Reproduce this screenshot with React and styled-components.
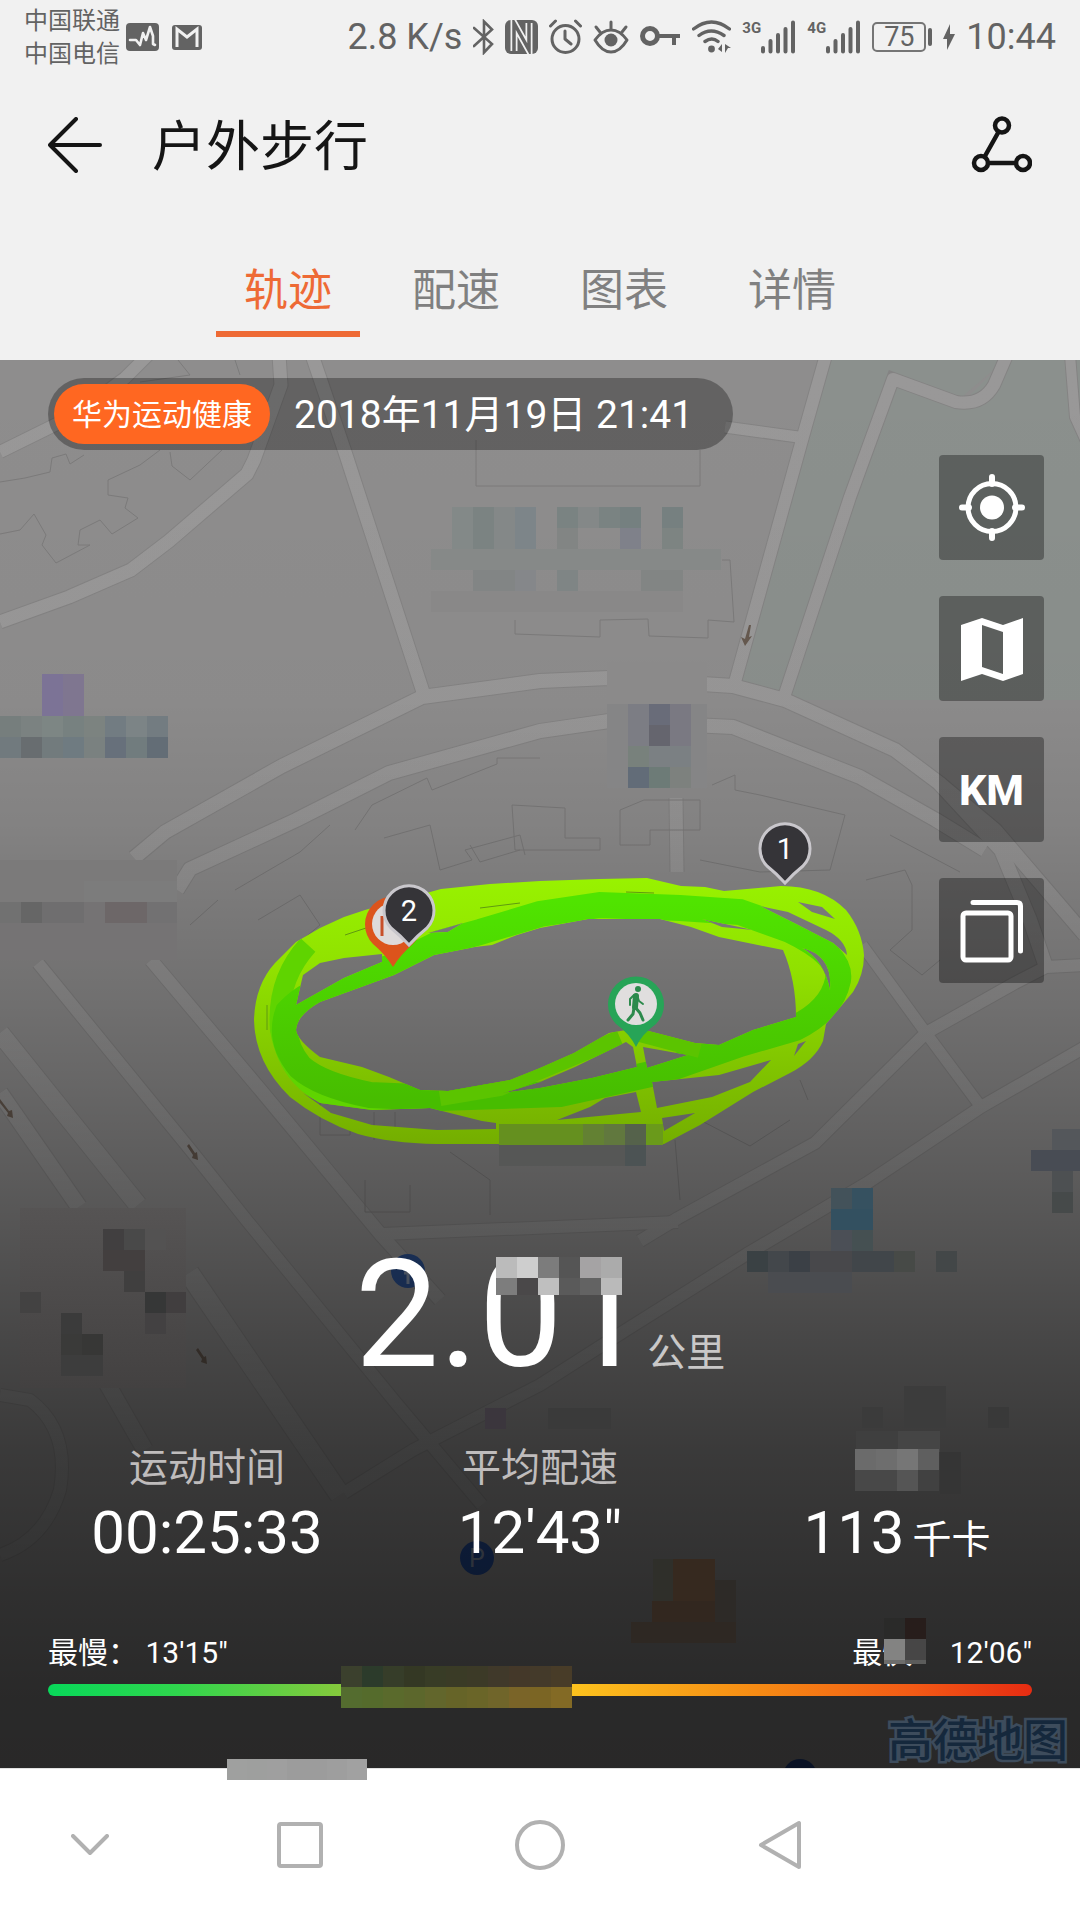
import React, { useState } from 'react';
import styled, { createGlobalStyle } from 'styled-components';

const GlobalStyle = createGlobalStyle`
  *, *::before, *::after { box-sizing: border-box; }
  body {
    margin: 0;
    background: #f1f1f1;
    font-family: Roboto, "Noto Sans CJK SC", sans-serif;
  }
  button {
    border: 0;
    padding: 0;
    background: none;
    font: inherit;
    color: inherit;
    cursor: pointer;
  }
  svg { display: block; }
`;

const Screen = styled.div`
  min-height: 100vh;
  display: flex;
  flex-direction: column;
`;

/* ---------- status bar ---------- */

const StatusBar = styled.div`
  height: 74px;
  padding: 0 24px;
  display: flex;
  align-items: center;
  justify-content: space-between;
  color: #636363;
`;

const StatusGroup = styled.div`
  display: flex;
  align-items: center;
  gap: ${(p) => p.$gap}px;
`;

const Carriers = styled.div`
  padding-top: 2px;
  font-size: 24px;
  line-height: 33px;
  white-space: nowrap;
`;

const StatusText = styled.span`
  font-size: 36px;
  line-height: 42px;
  white-space: nowrap;
`;

const Signal = styled.span`
  display: flex;
  align-items: flex-start;
`;

const SignalKind = styled.span`
  width: 18px;
  font-size: 15px;
  line-height: 16px;
  font-weight: 700;
`;

const Battery = styled.span`
  display: flex;
  align-items: center;
  gap: 2px;

  &::after {
    content: '';
    width: 4px;
    height: 18px;
    border-radius: 2px;
    background: #636363;
  }
`;

const BatteryLevel = styled.span`
  width: 54px;
  height: 30px;
  border: 2px solid #757575;
  border-radius: 5px;
  font-size: 27px;
  line-height: 27px;
  text-align: center;
`;

/* ---------- header ---------- */

const TitleBar = styled.header`
  height: 144px;
  padding: 0 48px 2px;
  display: flex;
  align-items: center;
  gap: 50px;
  color: #151515;
`;

const Title = styled.h1`
  margin: 0;
  padding-top: 6px;
  flex: 1;
  font-size: 54px;
  line-height: 64px;
  font-weight: 400;
`;

const Tabs = styled.div`
  display: flex;
  justify-content: center;
  gap: 24px;
  padding: 29px 0 23px;
`;

const Tab = styled.button`
  width: 144px;
  height: 90px;
  padding-top: 4px;
  border-bottom: 6px solid ${(p) => (p.$active ? '#ee6a35' : 'transparent')};
  color: ${(p) => (p.$active ? '#ee6a35' : '#808080')};
  font-size: 44px;
  line-height: 52px;
`;

/* ---------- map ---------- */

const MapPanel = styled.main`
  position: relative;
  flex: 1;
  display: flex;
  flex-direction: column;
  padding: 18px 0 72px;
  background: #2a2929;
`;

const MapCanvas = styled.svg`
  position: absolute;
  inset: 0;
  width: 100%;
  height: 100%;
`;

const Overlay = styled.div`
  position: relative;
  display: flex;
  flex-direction: column;
  flex: 1;
`;

const Banner = styled.div`
  align-self: flex-start;
  display: flex;
  align-items: center;
  gap: 24px;
  height: 72px;
  margin-left: 48px;
  padding: 6px 40px 6px 6px;
  border-radius: 36px;
  background: rgba(0, 0, 0, 0.3);
  color: #fff;
`;

const Brand = styled.span`
  padding: 1px 18px 0;
  border-radius: 30px;
  background: #ff6721;
  font-size: 30px;
  line-height: 59px;
  white-space: nowrap;
`;

const DateText = styled.time`
  padding-top: 2px;
  font-size: 39px;
  line-height: 58px;
  white-space: nowrap;
`;

const Tools = styled.div`
  align-self: flex-end;
  display: flex;
  flex-direction: column;
  gap: 36px;
  margin: 5px 36px 0 0;
`;

const ToolButton = styled.button`
  width: 105px;
  height: 105px;
  border-radius: 4px;
  display: grid;
  place-items: center;
  background: rgba(0, 0, 0, 0.33);
  color: #fff;
  font-size: 43px;
  line-height: 48px;
  font-weight: 800;
`;

/* ---------- figures ---------- */

const Stats = styled.section`
  margin-top: auto;
  color: #fff;
`;

const Distance = styled.div`
  display: flex;
  align-items: baseline;
  justify-content: center;
`;

const DistanceValue = styled.span`
  position: relative;
  font-size: 150px;
  line-height: 176px;
`;

const Unit = styled.span`
  font-size: 39px;
  line-height: 46px;
  color: #c9c8c8;
`;

const ValueUnit = styled(Unit)`
  margin-left: 8px;
  color: #fff;
`;

const Metrics = styled.dl`
  margin: 42px 0 67px;
  padding-left: 48px;
  display: grid;
  grid-template-columns: 318fr 348fr 366fr;
`;

const Metric = styled.div`
  display: flex;
  flex-direction: column;
  align-items: center;
  gap: 7px;
`;

const MetricLabel = styled.dt`
  height: 46px;
  display: flex;
  align-items: flex-end;
  font-size: 39px;
  line-height: 46px;
  color: #bfbcbc;
`;

const MetricValue = styled.dd`
  margin: 0;
  font-size: 60px;
  line-height: 70px;
  white-space: nowrap;
`;

const PaceRange = styled.div`
  padding: 0 48px;
`;

const PaceEnds = styled.div`
  display: flex;
  justify-content: space-between;
  margin-bottom: 13px;
  font-size: 30px;
  line-height: 36px;
`;

const PaceEnd = styled.span`
  position: relative;
  white-space: nowrap;
`;

const PaceBar = styled.div`
  position: relative;
  height: 12px;
  border-radius: 6px;
  background: linear-gradient(90deg, #08d85a 0%, #2fd64d 13%, #86c93c 30%, #fcc31e 53%, #f68b14 72%, #f25a16 88%, #e62c12 100%);
`;

/* ---------- blurred cells ---------- */

const MosaicGrid = styled.span`
  display: grid;
  grid-template-columns: repeat(${(p) => p.$cols}, ${(p) => p.$size}px);
  grid-template-rows: ${(p) => p.$rows};
`;

const FloatingMosaic = styled(MosaicGrid)`
  position: absolute;
  left: ${(p) => p.$left};
  top: ${(p) => p.$top}px;
`;

const Cell = styled.span`
  background: ${(p) => p.$color};
`;

function Mosaic({ cells, rows = '21px 21px', size = 21, left, top }) {
  const Grid = left === undefined ? MosaicGrid : FloatingMosaic;
  return (
    <Grid $cols={cells[0].length} $size={size} $rows={rows} $left={left} $top={top}>
      {cells.flat().map((color, i) => (
        <Cell key={i} $color={color} />
      ))}
    </Grid>
  );
}

/* ---------- system navigation ---------- */

const SystemNav = styled.nav`
  position: relative;
  height: 152px;
  display: grid;
  grid-template-columns: 3fr 4fr 4fr 4fr 3fr;
  background: #fff;
  border-top: 1px solid #e2e2e2;
`;

const NavButton = styled.button`
  display: grid;
  place-items: center;
  color: #b1b1b1;
`;

/* ---------- icons ---------- */

const line = { fill: 'none', stroke: 'currentColor', strokeLinecap: 'round', strokeLinejoin: 'round' };

const ActivityIcon = () => (
  <svg width="33" height="28" viewBox="0 0 33 28">
    <rect width="33" height="28" rx="4" fill="currentColor" />
    <path d="M4 17h6l4 5 3-12 3 7 4-13 3 9v8l2 1" {...line} stroke="#f1f1f1" strokeWidth="2.6" />
  </svg>
);

const MailIcon = () => (
  <svg width="30" height="25" viewBox="0 0 30 25">
    <rect width="30" height="25" rx="3" fill="currentColor" />
    <path d="M5 22V4l10 8 10-8v18" fill="none" stroke="#f1f1f1" strokeWidth="3" />
  </svg>
);

const BluetoothIcon = () => (
  <svg width="21" height="36" viewBox="0 0 21 36">
    <path d="M1 9l18 16-8 8.500V2.500l8 8L1 27" {...line} strokeWidth="2.600" strokeLinejoin="miter" />
  </svg>
);

const NfcIcon = () => (
  <svg width="33" height="34" viewBox="0 0 33 34">
    <rect width="33" height="34" rx="6" fill="currentColor" />
    <path d="M9 31V3l15 27V3" fill="none" stroke="#f1f1f1" strokeWidth="7" />
    <path d="M9 33V3l15 27V1" fill="none" stroke="currentColor" strokeWidth="3.500" />
  </svg>
);

const AlarmIcon = () => (
  <svg width="33" height="36" viewBox="0 0 33 36">
    <g {...line} strokeWidth="3">
      <circle cx="16.500" cy="20" r="13.500" />
      <path d="M16 12v8l6 5M1.500 7l5-5M31.500 7l-5-5" />
    </g>
  </svg>
);

const EyeIcon = () => (
  <svg width="36" height="34" viewBox="0 0 36 34">
    <g {...line} strokeWidth="3">
      <path d="M2 20q7-10 16-10t16 10q-7 12-16 12T2 20zM18 9V2M7 12L3 7M29 12l4-5" />
    </g>
    <circle cx="18" cy="20" r="6.500" fill="currentColor" />
  </svg>
);

const KeyIcon = () => (
  <svg width="41" height="22" viewBox="0 0 41 22">
    <circle cx="10" cy="10" r="7.500" fill="none" stroke="currentColor" strokeWidth="5" />
    <path d="M18 10h22M34 10v9" fill="none" stroke="currentColor" strokeWidth="4" />
  </svg>
);

const WifiIcon = () => (
  <svg width="39" height="34" viewBox="0 0 39 34">
    <path d="M1.500 9q18-14 36 0M7 15.500q12-9 25 0M13 21.500q7-5 13 0" {...line} strokeWidth="3.400" />
    <circle cx="19.500" cy="29" r="3.400" fill="currentColor" />
    <path d="M30 24v8l-4-3zM33 24l6 4-3 0-3 5z" fill="currentColor" />
  </svg>
);

const BarsIcon = () => (
  <svg width="36" height="34" viewBox="0 0 36 34">
    <path d="M3 28v3.500M10.500 21v10.500M18 15v16.500M25.500 9v22.500M33 2.500v29" {...line} strokeWidth="4" />
  </svg>
);

const BoltIcon = () => (
  <svg width="12" height="26" viewBox="0 0 12 26">
    <path d="M7 0L0 15h4v11l8-16H7z" fill="currentColor" />
  </svg>
);

const BackIcon = () => (
  <svg width="54" height="56" viewBox="0 0 54 56">
    <path d="M28 2L2 28l26 26M2 28h50" {...line} strokeWidth="4" />
  </svg>
);

const ShareIcon = () => (
  <svg width="62" height="58" viewBox="0 0 62 58">
    <g {...line} strokeWidth="4.500">
      <circle cx="32" cy="9.500" r="7" />
      <circle cx="11" cy="47" r="7" />
      <circle cx="53" cy="47" r="7" />
      <path d="M28.500 16L15 40M18 47h28" />
    </g>
  </svg>
);

const LocateIcon = () => (
  <svg width="66" height="67" viewBox="0 0 66 67">
    <circle cx="33" cy="33.500" r="24" fill="none" stroke="currentColor" strokeWidth="5" />
    <circle cx="33" cy="33.500" r="12" fill="currentColor" />
    <path d="M33 3v7M33 57v7M3 33.500h7M56 33.500h7" {...line} strokeWidth="6" />
  </svg>
);

const MapIcon = () => (
  <svg width="64" height="64" viewBox="0 0 64 64">
    <path
      d="M1 8L22 1l21 7 20-7v56l-20 7-21-7-21 7zM22 8v42l21 7V15z"
      fill="currentColor"
      fillRule="evenodd"
    />
  </svg>
);

const LayersIcon = () => (
  <svg width="64" height="64" viewBox="0 0 64 64">
    <rect x="3" y="14" width="48" height="47" rx="3" fill="none" stroke="currentColor" strokeWidth="5" />
    <path d="M13 3.500h44q3.500 0 3.500 3.500v45" {...line} strokeWidth="5" />
  </svg>
);

/* ---------- map drawing ---------- */

const ROADS = [
  [12, 'M148 355L125 378L75 415L0 452'],
  [13, 'M279 355L281 385L254 460L247 474L169 541L131 570L69 597L0 622'],
  [13, 'M312 355L345 452L424 695'],
  [12, 'M826 355L802 440L735 682'],
  [12, 'M1007 355L994 385Q982 406 956 402L893 379L850 497L784 697'],
  [11, 'M725 427L798 437'],
  [10, 'M1070 355L1075 417L1090 450'],
  [14, 'M134 858L165 832L282 766L422 697L540 681L609 678L733 686L785 700L895 750L939 783L1001 850L1030 920L1046 967'],
  [14, 'M177 890L190 869L296 820L389 773L540 731L609 721L733 727L860 777L936 820L985 850'],
  [14, 'M939 783L995 830L1085 935'],
  [13, 'M676 798L677 872'],
  [12, 'M38 963L193 1153L248 1222L396 1403L482 1505'],
  [13, 'M151 960L258 1087L382 1236L440 1300'],
  [18, 'M0 1033L138 1205'],
  [16, 'M0 1093L79 1207'],
  [20, 'M189 1273L340 1495'],
  [12, 'M344 1493L413 1450L540 1385L626 1330L747 1254L867 1183L981 1107L1085 1047'],
  [12, 'M640 1241L678 1218L815 1143L926 1033L1015 983L1046 967L1085 965'],
  [11, 'M862 945L926 1033L981 1107'],
  [12, 'M382 1234L678 1222'],
  [16, 'M105 1380L145 1450'],
  [12, 'M0 1395L30 1400Q70 1430 60 1490Q45 1540 0 1555'],
];

const BUILDINGS = [
  'M0 482L25 478L50 472L52 458L66 454L70 464L84 455M170 452L172 466L190 480L222 450M0 534L20 530L34 514L46 535L42 545L56 563L90 545L78 545L80 530L100 520L112 534L138 518L125 508L128 498L108 495L108 480L140 465L160 450',
  'M476 440V486H700V450M515 620V634L600 637V620L648 619L649 636L708 638V620L734 622L730 560H722',
  'M178 360L190 375L140 382M235 360L240 375',
  'M540 758H497V764L432 790L427 778L372 805L355 830M520 850L480 862L470 845M235 890L300 852L330 825M190 925L218 900M258 920L300 895L320 925L290 950M512 805L565 808V838H600V850H515zM644 800H700V830H650V845H620V810z',
  'M384 838L430 825L440 870L472 860L465 850L520 835L525 855M712 785L735 775V790L760 795L845 815L830 870L760 872L700 860',
  'M866 880L905 870L912 885V930L890 950L922 975L940 960M890 835L960 872',
  'M320 1100V1135H350V1125M374 1112V1140M395 1112V1140M365 1180V1212H410V1185M450 1152L490 1180V1215M675 1140L680 1200M700 1120L750 1146L790 1120M800 1080L808 1100',
];

const TRACK_AREA =
  'M254 1020Q255 985 275 963L296 942L320 928L344 917L365 910L441 889L490 884L540 881L600 879L647 878L681 886L705 887L724 891L781 886Q822 886 846 910Q862 930 864 955Q864 975 853 992L826 1024L823 1041Q815 1060 790 1073L753 1092L700 1125L664 1144H499L437 1144Q390 1143 358 1134Q320 1121 290 1097Q255 1063 254 1020Z' +
  'M296 1030Q297 1015 320 1002L394 975L434 955L475 947L492 945L517 935L540 928L588 919L660 919L691 927L719 937L783 950Q796 980 796 1017L753 1030L719 1045L695 1043L637 1028L609 1033L574 1053L540 1068L510 1080L448 1091L420 1090L389 1077L362 1067L320 1057Q297 1040 296 1030Z' +
  'M503 1093L540 1082L575 1067L626 1042L633 1047L637 1067L592 1078L540 1088Z' +
  'M643 1047L688 1055L647 1068Z' +
  'M652 1082L719 1075L771 1060L750 1082L712 1097L657 1108Z' +
  'M636 1092L605 1098L590 1107L557 1120L641 1112Z' +
  'M662 1118L695 1113L664 1131Z' +
  'M303 1093L320 1103L372 1110L430 1108L482 1121L496 1123V1129L437 1130L372 1125L331 1113Z' +
  'M296 1005L303 975L320 963L344 958L382 954V962L344 978Z' +
  'M428 933L463 923L448 932Z' +
  'M760 906L788 912L826 930Q846 940 847 955L833 943L798 925Z' +
  'M798 902L822 907L835 919L812 912Z' +
  'M802 948Q833 955 830 990Q824 960 802 948Z' +
  'M806 1041L794 1056L798 1044Z' +
  'M702 919L753 930L722 927Z';

const TRACK_CORE =
  'M288 1012Q308 990 345 983L394 966L440 943L480 932L540 914L600 905L680 908L740 912L790 930Q842 955 838 980Q832 1010 795 1028L740 1044L660 1072L560 1094L440 1098L370 1095Q320 1085 300 1067Q278 1040 288 1012Z';

/* x, y, width, height, colour of every blurred patch lying on the map */
const PATCHES = [
  [42, 674, 21, 42, '#7c7396'], [63, 674, 21, 42, '#7f7690'],
  [0, 716, 21, 21, '#767e7d'], [21, 716, 21, 21, '#7b8281'], [42, 716, 21, 21, '#7d8684'], [63, 716, 21, 21, '#778180'],
  [84, 716, 21, 21, '#7c8380'], [105, 716, 21, 21, '#727c82'], [126, 716, 21, 21, '#7c8486'], [147, 716, 21, 21, '#737c81'],
  [0, 737, 21, 21, '#717a7e'], [21, 737, 21, 21, '#686d70'], [42, 737, 21, 21, '#727b7d'], [63, 737, 21, 21, '#6f7b81'],
  [84, 737, 21, 21, '#7a8180'], [105, 737, 21, 21, '#67707b'], [126, 737, 21, 21, '#717c7e'], [147, 737, 21, 21, '#636d76'],
  [452, 507, 21, 42, '#838988'], [473, 507, 21, 42, '#7b8382'], [494, 507, 21, 42, '#848888'], [515, 507, 21, 42, '#7d8589'],
  [557, 507, 21, 21, '#7a8382'], [578, 507, 21, 21, '#848888'], [599, 507, 21, 21, '#7a8382'], [620, 507, 21, 21, '#758080'],
  [662, 507, 21, 21, '#768080'], [557, 528, 21, 21, '#828584'], [620, 528, 21, 21, '#7f818a'], [662, 528, 21, 21, '#7d8482'],
  [431, 549, 290, 21, '#868988'], [473, 570, 42, 21, '#828585'], [515, 570, 21, 40, '#85878a'], [557, 570, 21, 21, '#7f8585'],
  [641, 570, 42, 21, '#828584'], [431, 591, 252, 21, '#898888'],
  [607, 662, 100, 42, '#8b8a8a'], [607, 704, 100, 84, '#858586'],
  [628, 704, 21, 42, '#7c7d84'], [649, 704, 21, 21, '#696c79'], [649, 725, 21, 21, '#65656e'], [670, 704, 21, 42, '#7a7982'],
  [628, 746, 21, 21, '#78817c'], [649, 746, 42, 21, '#7b8083'], [628, 767, 21, 21, '#626c78'], [649, 767, 21, 21, '#6d7b77'],
  [670, 767, 21, 21, '#7d817e'],
  [0, 860, 177, 42, '#7b7a7a'], [84, 881, 93, 21, '#7c7c7c'],
  [0, 902, 177, 58, '#757374'], [0, 902, 21, 21, '#717171'], [21, 902, 21, 21, '#666'], [42, 902, 42, 21, '#6f6e6f'],
  [105, 902, 42, 21, '#6d6768'], [147, 902, 30, 21, '#727172'],
  [499, 1124, 84, 21, '#65901f'], [583, 1124, 21, 21, '#638133'], [604, 1124, 21, 21, '#61783e'], [625, 1124, 21, 21, '#55624b'],
  [646, 1124, 17, 21, '#6a9a1b'], [499, 1145, 126, 21, '#565756'], [625, 1145, 21, 21, '#4c5354'],
  [831, 1188, 21, 21, '#43525a'], [852, 1188, 21, 21, '#365160'], [831, 1209, 42, 21, '#335060'], [852, 1230, 21, 21, '#455052'],
  [831, 1230, 21, 21, '#4b4f56'],
  [747, 1251, 21, 21, '#3a4144'], [768, 1251, 21, 21, '#43474b'], [789, 1251, 21, 21, '#3b4046'], [810, 1251, 42, 21, '#48484b'],
  [852, 1251, 42, 21, '#41464a'], [894, 1251, 21, 21, '#474a47'], [936, 1251, 21, 21, '#434748'], [768, 1272, 84, 21, '#4a4c50'],
  [1031, 1150, 49, 21, '#484c54'], [1052, 1129, 28, 21, '#54575b'], [1052, 1171, 21, 21, '#4d5052'], [1052, 1192, 21, 21, '#464a4a'],
  [20, 1208, 166, 180, 'url(#patchShade)'], [103, 1229, 21, 21, '#413f40'], [124, 1229, 21, 21, '#494949'], [145, 1229, 21, 21, '#535252'],
  [103, 1250, 42, 21, '#433f3f'], [124, 1271, 21, 21, '#403f3f'], [20, 1292, 21, 21, '#434242'], [145, 1292, 21, 21, '#363737'],
  [166, 1292, 20, 21, '#413e3f'], [61, 1313, 21, 21, '#3b3b3b'], [145, 1313, 21, 21, '#434142'], [61, 1334, 42, 21, '#3a3a39'],
  [61, 1355, 42, 21, '#3d3d3d'], [82, 1334, 21, 21, '#373736'],
  [485, 1408, 21, 21, '#3b363d'], [548, 1408, 63, 21, '#3a3a3a'], [862, 1407, 21, 21, '#3b3b3b'], [904, 1386, 42, 42, '#3c3c3c'],
  [988, 1407, 21, 21, '#393939'],
  [856, 1431, 42, 21, '#3f3f3f'], [898, 1431, 42, 21, '#454545'], [940, 1452, 21, 42, '#353535'],
  [653, 1559, 20, 63, '#2f2f2a'], [673, 1559, 42, 63, '#36291f'], [715, 1580, 21, 42, '#2d2a27'],
  [631, 1622, 105, 21, '#2e2823'], [652, 1601, 63, 21, '#32271f'],
];

function NumberPin({ x, y, children }) {
  return (
    <g transform={`translate(${x} ${y})`}>
      <path
        d="M0 34Q-8 25-18 17A25 25 0 1 1 18 17Q8 25 0 34Z"
        fill="#353438"
        stroke="#c9c7cc"
        strokeWidth="3"
      />
      <text y="10" textAnchor="middle" fontSize="29" fill="#fff">{children}</text>
    </g>
  );
}

function RouteMap() {
  return (
    <MapCanvas viewBox="0 360 1080 1408" preserveAspectRatio="xMidYMid slice" aria-hidden="true">
      <defs>
        <linearGradient id="shade" gradientUnits="userSpaceOnUse" x1="0" y1="360" x2="0" y2="1768">
          {[[0, 0], [0.24, 0.02], [0.33, 0.08], [0.384, 0.14], [0.455, 0.21], [0.526, 0.29], [0.625, 0.41],
            [0.703, 0.51], [0.774, 0.59], [0.88, 0.67], [0.952, 0.71], [1, 0.715]].map(([at, alpha]) => (
              <stop key={at} offset={at} stopColor="#000" stopOpacity={alpha} />
          ))}
        </linearGradient>
        <linearGradient id="roadFill" gradientUnits="userSpaceOnUse" x1="0" y1="360" x2="0" y2="1500">
          <stop offset="0" stopColor="#999898" />
          <stop offset="0.55" stopColor="#989797" />
          <stop offset="1" stopColor="#929292" />
        </linearGradient>
        <linearGradient id="track" gradientUnits="userSpaceOnUse" x1="0" y1="880" x2="0" y2="1144">
          <stop offset="0" stopColor="#98f200" />
          <stop offset="0.35" stopColor="#90e000" />
          <stop offset="1" stopColor="#74ae00" />
        </linearGradient>
        <linearGradient id="trackCore" gradientUnits="userSpaceOnUse" x1="0" y1="900" x2="0" y2="1100">
          <stop offset="0" stopColor="#50e400" />
          <stop offset="1" stopColor="#47bd00" />
        </linearGradient>
        <linearGradient id="patchShade" x1="0" y1="0" x2="0" y2="1">
          <stop offset="0" stopColor="#565454" />
          <stop offset="1" stopColor="#434141" />
        </linearGradient>
        <clipPath id="trackClip">
          <path d={TRACK_AREA} clipRule="evenodd" />
        </clipPath>
      </defs>

      <rect y="360" width="1080" height="1408" fill="#8e8d8d" />
      <path d="M826 360H1005L956 402L893 379L784 697L735 682ZM893 385L960 405L1005 360H1080V700H785Z" fill="#8b908d" />
      <g fill="none" stroke="#848383">
        {ROADS.map(([w, d]) => <path key={d} d={d} strokeWidth={w + 2} />)}
      </g>
      <g fill="none" stroke="url(#roadFill)" strokeLinejoin="round">
        {ROADS.map(([w, d]) => <path key={d} d={d} strokeWidth={w} />)}
      </g>
      <g fill="none" stroke="#7c7b7b" strokeWidth="1">
        {BUILDINGS.map((d) => <path key={d} d={d} />)}
      </g>
      <g fill="#66594f">
        <path d="M749 625l-4 14-4-2 4 9 7-10-3 1 2-12z" />
        <path d="M0 1103l8 10-1 3 6 2-1-8-3 1-9-12zM187 1146l6 9-1 3 6 2-1-8-2 1-6-9zM196 1350l6 9-1 3 6 2-1-8-2 1-6-9z" />
      </g>

      <g>
        <circle cx="408" cy="1271" r="17" fill="#2b5090" />
        <circle cx="477" cy="1558" r="17" fill="#234a94" />
        <text x="477" y="1567" textAnchor="middle" fontSize="25" fill="#8190a8">P</text>
        <circle cx="800" cy="1776" r="17" fill="#1f3f80" />
        <path d="M404 1273h12M408 1274v10" stroke="#8190a8" strokeWidth="3" />
      </g>

      <rect y="360" width="1080" height="1408" fill="url(#shade)" />

      <path d={TRACK_AREA} fill="url(#track)" fillRule="evenodd" />
      <g clipPath="url(#trackClip)" fill="none">
        <path d="M308 945Q276 980 280 1030Q290 1085 340 1100L430 1100" stroke="#5fd400" strokeWidth="20" />
        <path d={TRACK_CORE} stroke="url(#trackCore)" strokeWidth="26" />
        <path d="M640 1034L700 1050M620 1038L500 1088L440 1098" stroke="#5bc400" strokeWidth="16" />
        <path d="M345 935L366 928L392 923M626 892L654 893M480 908L520 903M267 1005V1030" stroke="#5f9a10" strokeWidth="1" />
      </g>

      <g shapeRendering="crispEdges">
        {PATCHES.map(([x, y, w, h, fill], i) => (
          <rect key={i} x={x} y={y} width={w} height={h} fill={fill} />
        ))}
      </g>

      <g transform="translate(393 924)">
        <path d="M0 43Q-8 30-20 20A28 28 0 1 1 20 20Q8 30 0 43Z" fill="#dc541c" />
        <circle r="21" fill="#dedada" />
        <path d="M-11 12V-8" stroke="#c8502a" strokeWidth="3" />
      </g>
      <NumberPin x={409} y={911}>2</NumberPin>
      <NumberPin x={785} y={849}>1</NumberPin>

      <g transform="translate(636 1004)">
        <path d="M0 43Q-6 30-20 20A28 28 0 1 1 20 20Q6 30 0 43Z" fill="#27a457" />
        <circle r="21" fill="#e0dede" />
        <circle cx="2" cy="-15" r="3" fill="#2c8a4c" />
        <g fill="none" stroke="#2c8a4c" strokeLinecap="round" strokeLinejoin="round">
          <path d="M0-8L-1 3" strokeWidth="6" />
          <path d="M-1 3L4 9L7 16M-2 4L-3 10L-8 16" strokeWidth="3" />
          <path d="M1-9L3-3L7 0M-2-9L-6-5V1" strokeWidth="2" />
        </g>
      </g>

      <text
        x="978"
        y="1757"
        textAnchor="middle"
        fontSize="45"
        fontWeight="500"
        fill="#15283c"
        stroke="#3d4c5c"
        strokeWidth="5"
        paintOrder="stroke"
      >
        高德地图
      </text>
    </MapCanvas>
  );
}

/* ---------- page ---------- */

const TABS = ['轨迹', '配速', '图表', '详情'];

const DISTANCE_CELLS = [
  ['#bbbbbb', '#cecece', '#7c7c7c', '#555555', '#a5a3a4', '#ababab'],
  ['#7d7d7d', '#4a4849', '#bfbfbf', '#5a5a5a', '#636363', '#bababa'],
];
const LABEL_CELLS = [
  ['#6b6b6b', '#6e6e6e', '#767676', '#5f5f5f'],
  ['#484848', '#484848', '#555555', '#414141'],
];
const FASTEST_CELLS = [
  ['#2a2a29', '#271d1b'],
  ['#838382', '#474646'],
  ['#6d6d6c', '#5c5c5b'],
];
const BAR_CELLS = [
  ['#3b402d', '#2c3b2b', '#363d29', '#343824', '#383c26', '#3a3b26', '#3c3a27', '#40392a', '#443829', '#443a2a', '#483c28'],
  ['#546c2f', '#556b2c', '#5a6a2c', '#5c672c', '#62662c', '#666428', '#6a6528', '#70652a', '#7a6428', '#7b6524', '#836a25'],
];
const NAV_CELLS = [['#9fa09f', '#9e9f9e', '#9f9f9f', '#9c9c9c', '#9c9c9c', '#9e9e9e', '#a1a1a1']];

export default function App() {
  const [tab, setTab] = useState(TABS[0]);

  return (
    <Screen>
      <GlobalStyle />
      <StatusBar>
        <StatusGroup $gap={6}>
          <Carriers>
            <div>中国联通</div>
            <div>中国电信</div>
          </Carriers>
          <StatusGroup $gap={13}>
            <ActivityIcon />
            <MailIcon />
          </StatusGroup>
        </StatusGroup>
        <StatusGroup $gap={11}>
          <StatusText>2.8 K/s</StatusText>
          <BluetoothIcon />
          <NfcIcon />
          <AlarmIcon />
          <EyeIcon />
          <KeyIcon />
          <WifiIcon />
          <Signal><SignalKind>3G</SignalKind><BarsIcon /></Signal>
          <Signal><SignalKind>4G</SignalKind><BarsIcon /></Signal>
          <Battery><BatteryLevel>75</BatteryLevel></Battery>
          <BoltIcon />
          <StatusText>10:44</StatusText>
        </StatusGroup>
      </StatusBar>

      <TitleBar>
        <button type="button" aria-label="返回"><BackIcon /></button>
        <Title>户外步行</Title>
        <button type="button" aria-label="分享"><ShareIcon /></button>
      </TitleBar>

      <Tabs role="tablist">
        {TABS.map((name) => (
          <Tab
            key={name}
            type="button"
            role="tab"
            aria-selected={name === tab}
            $active={name === tab}
            onClick={() => setTab(name)}
          >
            {name}
          </Tab>
        ))}
      </Tabs>

      <MapPanel>
        <RouteMap />
        <Overlay>
          <Banner>
            <Brand>华为运动健康</Brand>
            <DateText dateTime="2018-11-19T21:41">2018年11月19日 21:41</DateText>
          </Banner>
          <Tools>
            <ToolButton type="button" aria-label="定位"><LocateIcon /></ToolButton>
            <ToolButton type="button" aria-label="地图"><MapIcon /></ToolButton>
            <ToolButton type="button">KM</ToolButton>
            <ToolButton type="button" aria-label="图层"><LayersIcon /></ToolButton>
          </Tools>

          <Stats>
            <Distance>
              <DistanceValue>
                2.01
                <Mosaic cells={DISTANCE_CELLS} rows="21px 17px" left="141px" top={30} />
              </DistanceValue>
              <Unit>公里</Unit>
            </Distance>
            <Metrics>
              <Metric>
                <MetricLabel>运动时间</MetricLabel>
                <MetricValue>00:25:33</MetricValue>
              </Metric>
              <Metric>
                <MetricLabel>平均配速</MetricLabel>
                <MetricValue>12'43"</MetricValue>
              </Metric>
              <Metric>
                <MetricLabel><Mosaic cells={LABEL_CELLS} /></MetricLabel>
                <MetricValue>113<ValueUnit>千卡</ValueUnit></MetricValue>
              </Metric>
            </Metrics>
            <PaceRange>
              <PaceEnds>
                <PaceEnd>最慢： 13'15"</PaceEnd>
                <PaceEnd>
                  最快： 12'06"
                  <Mosaic cells={FASTEST_CELLS} rows="21px 21px 4px" left="32px" top={-17} />
                </PaceEnd>
              </PaceEnds>
              <PaceBar>
                <Mosaic cells={BAR_CELLS} left="293px" top={-18} />
              </PaceBar>
            </PaceRange>
          </Stats>
        </Overlay>
      </MapPanel>

      <SystemNav>
        <NavButton type="button" aria-label="收起">
          <svg width="38" height="22" viewBox="0 0 38 22"><path d="M2 2l17 17L36 2" {...line} strokeWidth="4" /></svg>
        </NavButton>
        <NavButton type="button" aria-label="最近任务">
          <svg width="46" height="46" viewBox="0 0 46 46"><rect x="2" y="2" width="42" height="42" rx="2" {...line} strokeWidth="4" /></svg>
        </NavButton>
        <NavButton type="button" aria-label="主屏幕">
          <svg width="50" height="50" viewBox="0 0 50 50"><circle cx="25" cy="25" r="23" {...line} strokeWidth="4" /></svg>
        </NavButton>
        <NavButton type="button" aria-label="后退">
          <svg width="44" height="50" viewBox="0 0 44 50"><path d="M41 3v44L3 25z" {...line} strokeWidth="4" /></svg>
        </NavButton>
        <Mosaic cells={NAV_CELLS} rows="21px" size={20} left="21%" top={-10} />
      </SystemNav>
    </Screen>
  );
}
